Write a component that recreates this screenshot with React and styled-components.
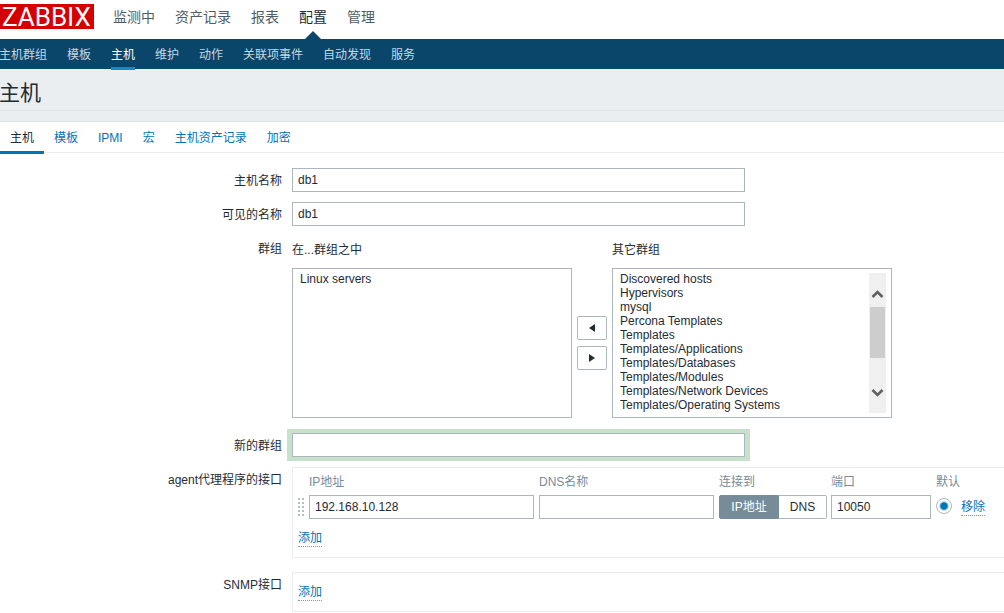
import React, { useState } from 'react';
import styled, { createGlobalStyle, css } from 'styled-components';

const GlobalStyle = createGlobalStyle`
  * {
    box-sizing: border-box;
  }

  body {
    margin: 0;
    overflow-x: hidden;
    background: #fff;
    color: #1f2c33;
    font-family: 'Liberation Sans', 'Noto Sans CJK SC', sans-serif;
    font-size: 12px;
    line-height: 24px;
  }

  input, button, select {
    margin: 0;
    color: inherit;
    font: inherit;
  }
`;

const Header = styled.header`
  display: flex;
  align-items: flex-start;
  height: 39px;
  padding-top: 4px;
`;

const Logo = styled.a`
  width: 94px;
  height: 25px;
  padding-left: 2px;
  background: #d40000;
  color: #fff;
  font-family: Roboto, sans-serif;
  font-size: 26px;
  line-height: 26px;
  text-decoration: none;
`;

const MainMenu = styled.nav`
  display: flex;
  gap: 20px;
  margin-left: 19px;
`;

const MainLink = styled.a`
  position: relative;
  height: 35px;
  color: ${({ $active }) => ($active ? '#1f2c33' : '#4f5e66')};
  font-size: 14px;
  line-height: 26px;
  text-decoration: none;

  ${({ $active }) =>
    $active &&
    css`
      &::after {
        content: '';
        position: absolute;
        left: 50%;
        bottom: 0;
        margin-left: -8px;
        border: 8px solid transparent;
        border-top: 0;
        border-bottom-color: #0a466a;
      }
    `}
`;

const SubMenu = styled.nav`
  display: flex;
  gap: 20px;
  height: 30px;
  margin-left: -1px;
  background: #0a466a;
`;

const SubLink = styled.a`
  z-index: 1;
  height: 31px;
  border-bottom: 3px solid ${({ $active }) => ($active ? '#1a87c9' : 'transparent')};
  color: ${({ $active }) => ($active ? '#fff' : '#c4d8e4')};
  line-height: 33px;
  text-decoration: none;
`;

const TitleBar = styled.div`
  height: 53px;
  margin-left: -1px;
  background: #ebeef0;
  border-bottom: 1px solid #dfe4e7;
`;

const Title = styled.h1`
  height: 42px;
  margin: 0;
  border-bottom: 1px solid #dfe4e7;
  font-size: 21px;
  font-weight: 400;
  line-height: 47px;
`;

const Tabs = styled.nav`
  display: flex;
  height: 31px;
  border-bottom: 1px solid #ebeef0;
`;

const Tab = styled.a`
  height: 32px;
  padding: 0 10px;
  border-bottom: 3px solid ${({ $active }) => ($active ? '#0275b8' : 'transparent')};
  color: ${({ $active }) => ($active ? '#1f2c33' : '#0275b8')};
  line-height: 33px;
  text-decoration: none;
`;

const Form = styled.form`
  display: flex;
  flex-direction: column;
  gap: 10px;
  padding-top: 15px;
`;

const Row = styled.div`
  display: grid;
  grid-template-columns: 282px minmax(0, 1fr);
  column-gap: 10px;
  margin-bottom: ${({ $space }) => $space || 0}px;
`;

const Label = styled.label`
  height: 24px;
  line-height: 26px;
  text-align: right;
`;

const TextInput = styled.input`
  display: block;
  width: ${({ $width }) => $width}px;
  height: 24px;
  padding: 0 5px;
  border: 1px solid #acb7bd;
  border-radius: 0;
  outline: 0;
  background: #fff;
  box-shadow: ${({ $highlight }) => ($highlight ? '1px 0 0 4px #c7e1cb, -1px 0 0 4px #c7e1cb' : 'none')};
`;

const Transfer = styled.div`
  display: flex;
  align-items: flex-end;
  gap: 5px;
`;

const ListColumn = styled.div`
  width: 280px;
`;

const ListTitle = styled.label`
  display: block;
  height: 32px;
  line-height: 29px;
`;

const ListBox = styled.div`
  display: flex;
  height: 150px;
  padding: 4px 5px 4px 4px;
  border: 1px solid #acb7bd;
`;

const List = styled.select`
  flex: 1;
  height: 142px;
  margin-top: -1px;
  padding: 0;
  border: 0;
  outline: 0;
  background: transparent;
  overflow: hidden;
`;

const Item = styled.option`
  height: 14px;
  min-height: 14px;
  padding: 0 3px;
  line-height: 14px;
`;

const ScrollBar = styled.div`
  display: flex;
  flex-direction: column;
  width: 17px;
  background: #f0f0f0;
`;

const ScrollThumb = styled.div`
  height: 51px;
  margin: 0 1px auto;
  background: #cdcdcd;
`;

const MoveButtons = styled.div`
  display: flex;
  flex-direction: column;
  justify-content: center;
  gap: 6px;
  height: 150px;
`;

const MoveButton = styled.button`
  display: flex;
  align-items: center;
  justify-content: center;
  width: 30px;
  height: 24px;
  padding: 0;
  border: 1px solid #acb7bd;
  border-radius: 2px;
  background: #fff;
`;

const Panel = styled.div`
  border: 1px solid #ebeef0;
  border-right: 0;
`;

const PanelFooter = styled.div`
  padding: 7px 5px;
`;

const Action = styled.a`
  display: inline-block;
  height: 21px;
  border-bottom: 1px dotted #5aa3cf;
  color: #0275b8;
  line-height: 25px;
  text-decoration: none;
  vertical-align: top;
`;

const InterfaceTable = styled.table`
  width: 100%;
  border-collapse: collapse;
  table-layout: fixed;
`;

const Th = styled.th`
  height: 27px;
  padding: 1px 0 0;
  color: #768d99;
  font-weight: 400;
  line-height: 26px;
  text-align: left;
`;

const Td = styled.td`
  height: 24px;
  padding: 0;
  vertical-align: top;
`;

const HandleCell = styled(Td)`
  padding-left: 5px;
`;

const Handle = styled.svg`
  display: block;
  margin-top: 3px;
`;

const Segments = styled.div`
  display: flex;
  width: 108px;
`;

const Segment = styled.label`
  width: ${({ $width }) => $width}px;
  height: 24px;
  border: 1px solid #acb7bd;
  border-left: 0;
  border-radius: 0 2px 2px 0;
  line-height: 22px;
  text-align: center;

  &:first-child {
    border-left: 1px solid #acb7bd;
    border-radius: 2px 0 0 2px;
  }

  &:has(input:checked) {
    border-color: #768d99;
    background: #768d99;
    color: #fff;
  }

  input {
    position: absolute;
    opacity: 0;
    pointer-events: none;
  }
`;

const Radio = styled.input`
  display: block;
  width: 16px;
  height: 16px;
  margin-top: 3px;
  border: 1px solid #acb7bd;
  border-radius: 50%;
  appearance: none;
  background: #fff;

  &:checked {
    background: radial-gradient(circle, #0275b8 3px, #fff 5px);
  }
`;

const mainMenu = ['监测中', '资产记录', '报表', '配置', '管理'];
const subMenu = ['主机群组', '模板', '主机', '维护', '动作', '关联项事件', '自动发现', '服务'];
const tabs = ['主机', '模板', 'IPMI', '宏', '主机资产记录', '加密'];
const otherGroups = [
  'Discovered hosts',
  'Hypervisors',
  'mysql',
  'Percona Templates',
  'Templates',
  'Templates/Applications',
  'Templates/Databases',
  'Templates/Modules',
  'Templates/Network Devices',
  'Templates/Operating Systems',
];

const DragHandle = () => (
  <Handle width="6" height="18" fill="#b4bfc5">
    {[0, 4, 8, 12, 16].map((y) => (
      <React.Fragment key={y}>
        <rect x="0" y={y} width="2" height="2" />
        <rect x="4" y={y} width="2" height="2" />
      </React.Fragment>
    ))}
  </Handle>
);

const ScrollArrow = ({ d }) => (
  <svg width="17" height="34" fill="none" stroke="#606060" strokeWidth="2.6">
    <path d={d} />
  </svg>
);

const App = () => {
  const [connect, setConnect] = useState('ip');

  return (
    <>
      <GlobalStyle />
      <Header>
        <Logo href="#">ZABBIX</Logo>
        <MainMenu>
          {mainMenu.map((name) => (
            <MainLink key={name} href="#" $active={name === '配置'}>{name}</MainLink>
          ))}
        </MainMenu>
      </Header>
      <SubMenu>
        {subMenu.map((name) => (
          <SubLink key={name} href="#" $active={name === '主机'}>{name}</SubLink>
        ))}
      </SubMenu>
      <TitleBar>
        <Title>主机</Title>
      </TitleBar>
      <Tabs>
        {tabs.map((name) => (
          <Tab key={name} href="#" $active={name === '主机'}>{name}</Tab>
        ))}
      </Tabs>

      <Form>
        <Row>
          <Label htmlFor="host">主机名称</Label>
          <TextInput id="host" $width={453} defaultValue="db1" />
        </Row>
        <Row>
          <Label htmlFor="visible">可见的名称</Label>
          <TextInput id="visible" $width={453} defaultValue="db1" />
        </Row>
        <Row $space={5}>
          <Label htmlFor="groups">群组</Label>
          <Transfer>
            <ListColumn>
              <ListTitle htmlFor="groups">在...群组之中</ListTitle>
              <ListBox>
                <List id="groups" multiple>
                  <Item>Linux servers</Item>
                </List>
              </ListBox>
            </ListColumn>
            <MoveButtons>
              <MoveButton type="button" aria-label="加入">
                <svg width="6" height="8" fill="#1f2c33"><path d="M6 0v8L0 4z" /></svg>
              </MoveButton>
              <MoveButton type="button" aria-label="移出">
                <svg width="6" height="8" fill="#1f2c33"><path d="M0 0v8l6-4z" /></svg>
              </MoveButton>
            </MoveButtons>
            <ListColumn>
              <ListTitle htmlFor="others">其它群组</ListTitle>
              <ListBox>
                <List id="others" multiple>
                  {otherGroups.map((name) => (
                    <Item key={name}>{name}</Item>
                  ))}
                </List>
                <ScrollBar>
                  <ScrollArrow d="M3.500 24l5-5 5 5" />
                  <ScrollThumb />
                  <ScrollArrow d="M3.500 11l5 5 5-5" />
                </ScrollBar>
              </ListBox>
            </ListColumn>
          </Transfer>
        </Row>
        <Row>
          <Label htmlFor="newgroup">新的群组</Label>
          <TextInput id="newgroup" $width={453} $highlight />
        </Row>
        <Row $space={4}>
          <Label as="span">agent代理程序的接口</Label>
          <Panel>
            <InterfaceTable>
              <colgroup>
                <col width="16" />
                <col width="230" />
                <col width="180" />
                <col width="112" />
                <col width="105" />
                <col width="25" />
                <col />
              </colgroup>
              <thead>
                <tr>
                  <Th />
                  <Th>IP地址</Th>
                  <Th>DNS名称</Th>
                  <Th>连接到</Th>
                  <Th>端口</Th>
                  <Th colSpan={2}>默认</Th>
                </tr>
              </thead>
              <tbody>
                <tr>
                  <HandleCell><DragHandle /></HandleCell>
                  <Td><TextInput aria-label="IP地址" $width={225} defaultValue="192.168.10.128" /></Td>
                  <Td><TextInput aria-label="DNS名称" $width={175} /></Td>
                  <Td>
                    <Segments>
                      <Segment $width={60}>
                        <input type="radio" name="connect" checked={connect === 'ip'} onChange={() => setConnect('ip')} />
                        IP地址
                      </Segment>
                      <Segment $width={48}>
                        <input type="radio" name="connect" checked={connect === 'dns'} onChange={() => setConnect('dns')} />
                        DNS
                      </Segment>
                    </Segments>
                  </Td>
                  <Td><TextInput aria-label="端口" $width={100} defaultValue="10050" /></Td>
                  <Td><Radio type="radio" name="main" aria-label="默认" defaultChecked /></Td>
                  <Td><Action href="#">移除</Action></Td>
                </tr>
              </tbody>
            </InterfaceTable>
            <PanelFooter>
              <Action href="#">添加</Action>
            </PanelFooter>
          </Panel>
        </Row>
        <Row>
          <Label as="span">SNMP接口</Label>
          <Panel>
            <PanelFooter>
              <Action href="#">添加</Action>
            </PanelFooter>
          </Panel>
        </Row>
      </Form>
    </>
  );
};

export default App;
